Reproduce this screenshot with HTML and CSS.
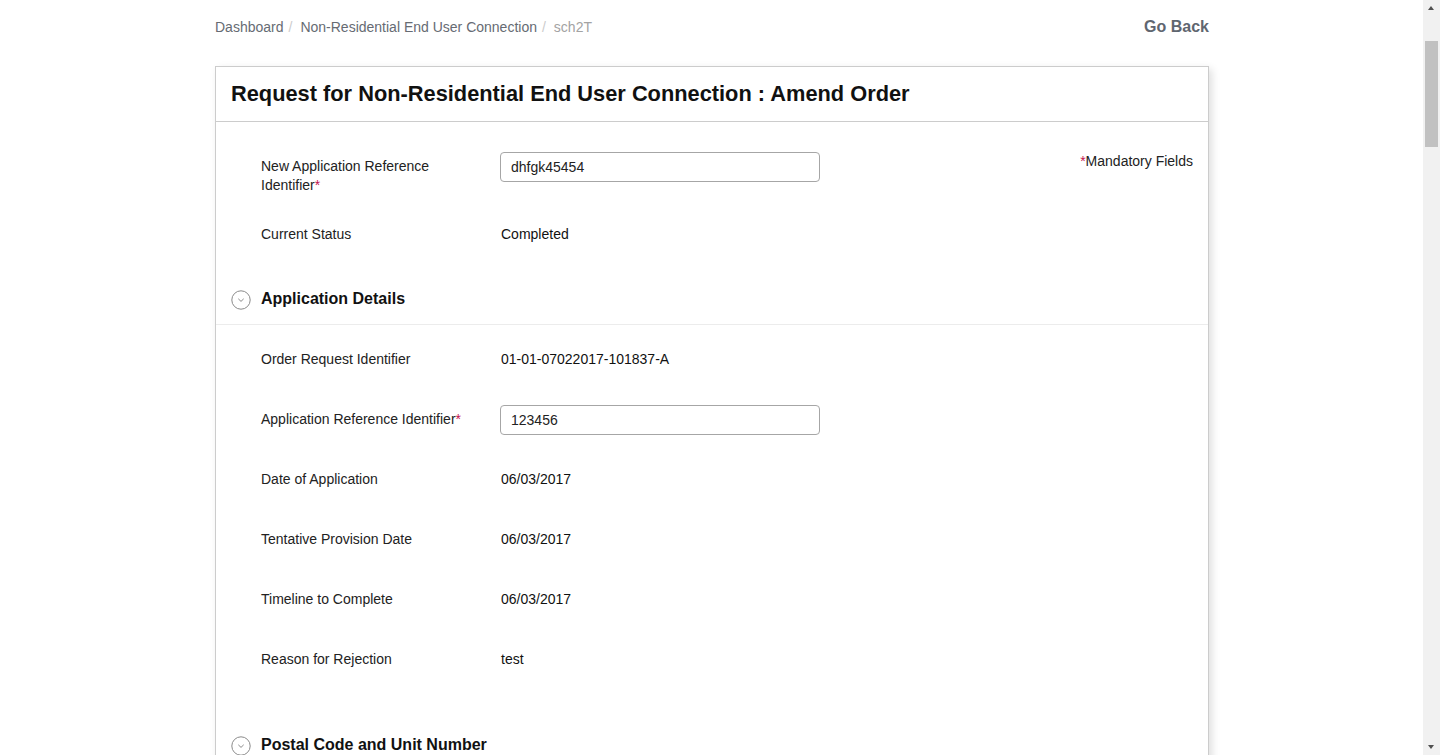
FILE: index.html
```html
<!DOCTYPE html>
<html lang="en">
<head>
<meta charset="utf-8">
<title>Amend Order</title>
<link rel="stylesheet" href="styles.css">
</head>
<body>
<div class="viewport">
  <main class="page">
    <div class="container">
      <div class="topbar">
        <ol class="breadcrumb">
          <li class="crumb"><a href="#">Dashboard</a></li>
          <li class="crumb"><a href="#">Non-Residential End User Connection</a></li>
          <li class="crumb active">sch2T</li>
        </ol>
        <a class="go-back" href="#">Go Back</a>
      </div>

      <section class="card">
        <header class="card-header">
          <h1 class="card-title">Request for Non-Residential End User Connection : Amend Order</h1>
        </header>

        <div class="card-body">
          <div class="row row-first">
            <label class="label">New Application Reference Identifier<span class="req">*</span></label>
            <div class="value"><input class="text-input" type="text" value="dhfgk45454"></div>
            <div class="mandatory"><span class="req">*</span>Mandatory Fields</div>
          </div>
          <div class="row row-last">
            <div class="label">Current Status</div>
            <div class="value static">Completed</div>
          </div>
        </div>

        <div class="section-header">
          <span class="toggle">
            <svg width="20" height="20" viewBox="0 0 20 20" aria-hidden="true">
              <circle cx="10" cy="10" r="9.2" fill="none" stroke="#8a8a8a" stroke-width="1"/>
              <path d="M7.3 8.8 L10 11.4 L12.7 8.8" fill="none" stroke="#8a8a8a" stroke-width="1"/>
            </svg>
          </span>
          <h2 class="section-title">Application Details</h2>
        </div>

        <div class="section-body">
          <div class="row">
            <div class="label">Order Request Identifier</div>
            <div class="value static">01-01-07022017-101837-A</div>
          </div>
          <div class="row">
            <label class="label">Application Reference Identifier<span class="req">*</span></label>
            <div class="value"><input class="text-input" type="text" value="123456"></div>
          </div>
          <div class="row">
            <div class="label">Date of Application</div>
            <div class="value static">06/03/2017</div>
          </div>
          <div class="row">
            <div class="label">Tentative Provision Date</div>
            <div class="value static">06/03/2017</div>
          </div>
          <div class="row">
            <div class="label">Timeline to Complete</div>
            <div class="value static">06/03/2017</div>
          </div>
          <div class="row">
            <div class="label">Reason for Rejection</div>
            <div class="value static">test</div>
          </div>
        </div>

        <div class="section-header">
          <span class="toggle">
            <svg width="20" height="20" viewBox="0 0 20 20" aria-hidden="true">
              <circle cx="10" cy="10" r="9.2" fill="none" stroke="#8a8a8a" stroke-width="1"/>
              <path d="M7.3 8.8 L10 11.4 L12.7 8.8" fill="none" stroke="#8a8a8a" stroke-width="1"/>
            </svg>
          </span>
          <h2 class="section-title">Postal Code and Unit Number</h2>
        </div>
      </section>
    </div>
  </main>

  <div class="scrollbar" aria-hidden="true">
    <div class="sb-button sb-up"></div>
    <div class="sb-track"><div class="sb-thumb"></div></div>
    <div class="sb-button sb-down"></div>
  </div>
</div>
</body>
</html>
```

FILE: styles.css
```css
html, body {
  margin: 0;
  padding: 0;
  height: 100%;
  overflow: hidden;
}

body {
  font-family: "Liberation Sans", Arial, Helvetica, sans-serif;
  font-size: 14px;
  color: #222;
  background: #fff;
}

.viewport {
  display: flex;
  height: 100vh;
}

.page {
  flex: 1;
  overflow: hidden;
  padding-left: 1px;
}

.container {
  width: 994px;
  margin: 0 auto;
}

/* top bar */
.topbar {
  display: flex;
  align-items: center;
  justify-content: space-between;
  height: 20px;
  padding-top: 17px;
  margin-bottom: 29px;
}

.breadcrumb {
  display: flex;
  list-style: none;
  margin: 0;
  padding: 0;
  line-height: 20px;
  font-size: 14px;
}

.crumb a {
  color: #666b73;
  text-decoration: none;
}

.crumb + .crumb::before {
  content: "/";
  color: #cccccc;
  padding: 0 8px 0 5px;
}

.crumb.active {
  color: #a3a3a3;
}

.go-back {
  font-size: 16px;
  font-weight: bold;
  color: #5f6670;
  text-decoration: none;
  line-height: 20px;
}

/* card */
.card {
  border: 1px solid #cccccc;
  box-shadow: 3px 3px 8px rgba(0, 0, 0, 0.13);
  background: #fff;
}

.card-header {
  border-bottom: 1px solid #cccccc;
  padding: 14px 15px 14px;
}

.card-title {
  margin: 0;
  font-size: 21.8px;
  line-height: 26px;
  font-weight: bold;
  color: #111;
}

.card-body {
  padding: 30px 15px 0 45px;
}

.row {
  display: flex;
  align-items: flex-start;
  min-height: 30px;
  margin-bottom: 30px;
}

.row-first {
  margin-bottom: 25px;
}

.row-last {
  margin-bottom: 24px;
}

.label {
  width: 205px;
  margin-right: 34px;
  padding-top: 5px;
  line-height: 19px;
  color: #222;
  font-size: 14px;
}

.req {
  color: #c4144f;
}

.value {
  line-height: 19px;
}

.value.static {
  padding-top: 5px;
  padding-left: 1px;
  color: #111;
}

.text-input {
  box-sizing: border-box;
  width: 320px;
  height: 30px;
  border: 1px solid #a6a6a6;
  border-radius: 4px;
  padding: 0 10px;
  font-family: "Liberation Sans", Arial, Helvetica, sans-serif;
  font-size: 14px;
  color: #222;
  background: #fff;
  outline: none;
}

.mandatory {
  margin-left: auto;
  margin-top: 0;
  line-height: 19px;
  color: #222;
}

/* sections */
.section-header {
  display: flex;
  align-items: center;
  height: 50px;
  padding-left: 15px;
  border-bottom: 1px solid #ececec;
}

.toggle {
  display: flex;
  width: 20px;
  height: 20px;
  margin-right: 10px;
  margin-top: 1px;
}

.section-title {
  margin: 0;
  font-size: 16px;
  font-weight: bold;
  line-height: 20px;
  color: #111;
}

.section-body {
  padding: 20px 15px 15px 45px;
}

/* fake scrollbar */
.scrollbar {
  width: 17px;
  flex: 0 0 17px;
  background: #f1f1f1;
  display: flex;
  flex-direction: column;
}

.sb-button {
  height: 17px;
  flex: 0 0 17px;
  position: relative;
}

.sb-up::after,
.sb-down::after {
  content: "";
  position: absolute;
  left: 5px;
  width: 0;
  height: 0;
  border-left: 3.5px solid transparent;
  border-right: 3.5px solid transparent;
}

.sb-up::after {
  top: 6px;
  border-bottom: 4px solid #505050;
}

.sb-down::after {
  top: 7px;
  border-top: 4px solid #505050;
}

.sb-track {
  flex: 1;
  padding: 24px 2px 0;
}

.sb-thumb {
  height: 106px;
  background: #c1c1c1;
}
```
